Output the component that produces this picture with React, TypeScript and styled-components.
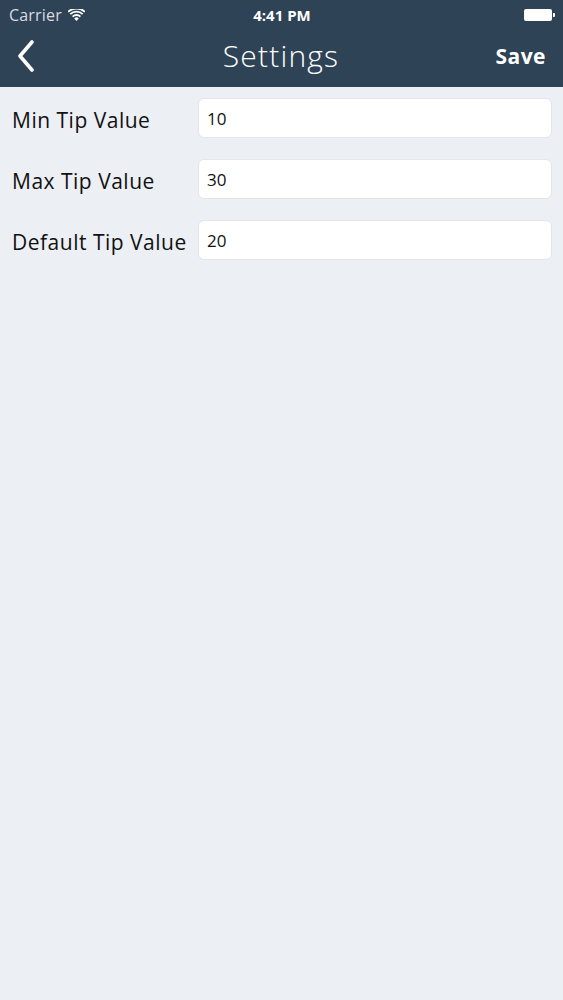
import React from "react";
import styled, { createGlobalStyle } from "styled-components";

const GlobalStyle = createGlobalStyle`
  html, body {
    margin: 0;
    padding: 0;
    background: #eceff4;
  }
  body {
    font-family: "Open Sans", "Lato", sans-serif;
  }
`;

const Screen = styled.div`
  width: 563px;
  min-height: 1000px;
  background: #eceff4;
`;

const Header = styled.header`
  background: #2e4355;
  height: 87px;
  display: flex;
  flex-direction: column;
`;

const StatusBar = styled.div`
  height: 29px;
  display: grid;
  grid-template-columns: 1fr auto 1fr;
  align-items: center;
  padding: 0 8px 0 9px;
  color: #ffffff;
`;

const Carrier = styled.div`
  display: flex;
  align-items: center;
  gap: 6px;
  font-size: 16px;
  letter-spacing: 0.2px;
  color: #d7dce1;
`;

const Clock = styled.div`
  font-size: 15px;
  font-weight: 700;
`;

const Battery = styled.div`
  justify-self: end;
  display: flex;
  align-items: center;
`;

const BatteryBody = styled.div`
  width: 28px;
  height: 12px;
  border-radius: 2px;
  background: #ffffff;
`;

const BatteryNub = styled.div`
  width: 2px;
  height: 4px;
  margin-left: 1px;
  background: #ffffff;
  border-radius: 0 1px 1px 0;
`;

const NavBar = styled.div`
  flex: 1;
  display: grid;
  grid-template-columns: 1fr auto 1fr;
  align-items: center;
  padding: 0 17px 5px 16px;
  color: #ffffff;
`;

const BackButton = styled.button`
  justify-self: start;
  background: none;
  border: 0;
  padding: 0;
  display: flex;
  cursor: pointer;
`;

const Title = styled.h1`
  margin: 0;
  font-size: 30px;
  font-weight: 300;
  letter-spacing: 1.2px;
  line-height: 1.2;
`;

const SaveButton = styled.button`
  justify-self: end;
  background: none;
  border: 0;
  padding: 0;
  color: #ffffff;
  font-family: "Open Sans", sans-serif;
  font-size: 21px;
  font-weight: 700;
  letter-spacing: 0.5px;
  cursor: pointer;
`;

const Form = styled.div`
  display: flex;
  flex-direction: column;
  gap: 21px;
  padding: 11px 11px 0 12px;
`;

const Row = styled.label`
  display: grid;
  grid-template-columns: 186px 1fr;
  align-items: center;
`;

const LabelText = styled.span`
  padding-top: 4px;
  font-size: 21px;
  letter-spacing: 0.5px;
  color: #111111;
  white-space: nowrap;
`;

const Field = styled.input`
  box-sizing: border-box;
  height: 40px;
  width: 100%;
  border: 1px solid #e3e5e8;
  border-radius: 6px;
  background: #ffffff;
  padding: 0 8px;
  font-family: "Open Sans", sans-serif;
  font-size: 17px;
  color: #111111;
  outline: none;
`;

const fields = [
  { label: "Min Tip Value", value: "10" },
  { label: "Max Tip Value", value: "30" },
  { label: "Default Tip Value", value: "20" },
];

const Wifi = () => (
  <svg width="17" height="12" viewBox="0 0 17 12">
    <path d="M8.5 12 L6.2 9.4 A3.3 3.3 0 0 1 10.8 9.4 Z" fill="#fff" />
    <path d="M4.6 7.6 A5.6 5.6 0 0 1 12.4 7.6" stroke="#fff" strokeWidth="1.8" fill="none" />
    <path d="M2.3 5.2 A8.8 8.8 0 0 1 14.7 5.2" stroke="#fff" strokeWidth="1.8" fill="none" />
    <path d="M0.2 2.9 A11.8 11.8 0 0 1 16.8 2.9" stroke="#fff" strokeWidth="1.8" fill="none" />
  </svg>
);

const Chevron = () => (
  <svg width="20" height="32" viewBox="0 0 20 32">
    <path d="M16 2 L4 16 L16 30" stroke="#fff" strokeWidth="3.6" fill="none" strokeLinecap="round" strokeLinejoin="round" />
  </svg>
);

export default function App() {
  return (
    <Screen>
      <GlobalStyle />
      <Header>
        <StatusBar>
          <Carrier>
            Carrier <Wifi />
          </Carrier>
          <Clock>4:41 PM</Clock>
          <Battery>
            <BatteryBody />
            <BatteryNub />
          </Battery>
        </StatusBar>
        <NavBar>
          <BackButton aria-label="Back">
            <Chevron />
          </BackButton>
          <Title>Settings</Title>
          <SaveButton>Save</SaveButton>
        </NavBar>
      </Header>
      <Form>
        {fields.map((f) => (
          <Row key={f.label}>
            <LabelText>{f.label}</LabelText>
            <Field defaultValue={f.value} />
          </Row>
        ))}
      </Form>
    </Screen>
  );
}
